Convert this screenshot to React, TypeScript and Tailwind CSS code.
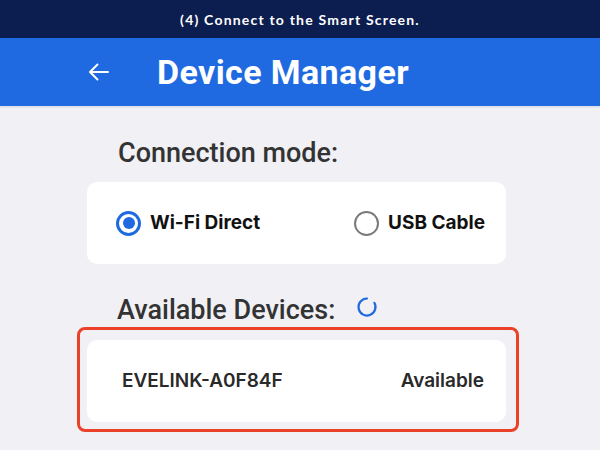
import React from "react";

function Radio({ checked }: { checked: boolean }) {
  return checked ? (
    <div className="w-[25px] h-[25px] rounded-full border-[3px] border-[#1f6ae0] flex items-center justify-center shrink-0">
      <div className="w-[12px] h-[12px] rounded-full bg-[#1f6ae0]" />
    </div>
  ) : (
    <div className="w-[25px] h-[25px] rounded-full border-[2.5px] border-[#7a7a7a] shrink-0" />
  );
}

export default function App() {
  return (
    <div className="w-[600px] h-[450px] overflow-hidden bg-[#f0f0f5] flex flex-col">
      <div className="h-[38px] bg-[#0c1d4f] flex items-center justify-center">
        <span
          className="text-white text-[14px] font-bold tracking-[1.2px]"
          style={{ fontFamily: "Lato, 'DejaVu Sans', sans-serif" }}
        >
          (4) Connect to the Smart Screen.
        </span>
      </div>
      <div className="h-[68px] bg-[#1f6ae0] flex items-center pl-[88px]">
        <svg width="21" height="18" viewBox="0 0 21 18" className="shrink-0">
          <path d="M20 9H2M9.5 1.5L2 9l7.5 7.5" fill="none" stroke="white" strokeWidth="2" strokeLinecap="round" strokeLinejoin="round" />
        </svg>
        <span
          className="ml-[48px] text-white text-[34px] font-bold leading-[38px] tracking-[0.4px]"
          style={{ fontFamily: "Roboto, sans-serif" }}
        >
          Device Manager
        </span>
      </div>
      <div className="h-[2px] bg-[#dde2ec]" />
      <div className="pl-[87px] w-[506px] flex flex-col">
        <div
          className="mt-[30px] pl-[31px] text-[27px] font-medium leading-[30px] text-[#333333]"
          style={{ fontFamily: "Roboto, sans-serif" }}
        >
          Connection mode:
        </div>
        <div
          className="mt-[14px] h-[82px] bg-white rounded-[10px] flex items-center justify-between pl-[29px] pr-[21px]"
          style={{ fontFamily: "Inter, sans-serif" }}
        >
          <div className="flex items-center gap-[9px]">
            <Radio checked />
            <span className="text-[19px] font-bold text-[#111111]">Wi-Fi Direct</span>
          </div>
          <div className="flex items-center gap-[9px]">
            <Radio checked={false} />
            <span className="text-[19px] font-bold text-[#111111]">USB Cable</span>
          </div>
        </div>
        <div className="mt-[31px] pl-[30px] flex items-center">
          <span
            className="text-[27px] font-medium leading-[30px] text-[#333333]"
            style={{ fontFamily: "Roboto, sans-serif" }}
          >
            Available Devices:
          </span>
          <svg width="22" height="22" viewBox="0 0 22 22" className="ml-[21px] -mt-[6px]">
            <path d="M11 2.5A8.5 8.5 0 1 0 18.4 6.8" fill="none" stroke="#1f6ae0" strokeWidth="2.2" strokeLinecap="round" />
          </svg>
        </div>
        <div className="mt-[2px] -ml-[10px] w-[442px] border-[3px] border-[#ea4128] rounded-[8px] pt-[10px] pb-[7px] pl-[7px] pr-[10px]">
          <div
            className="h-[82px] bg-white rounded-[10px] flex items-center justify-between pl-[35px] pr-[22px] text-[19px] font-semibold text-[#2a2a2a]"
            style={{ fontFamily: "Inter, sans-serif" }}
          >
            <span>EVELINK-A0F84F</span>
            <span>Available</span>
          </div>
        </div>
      </div>
    </div>
  );
}
